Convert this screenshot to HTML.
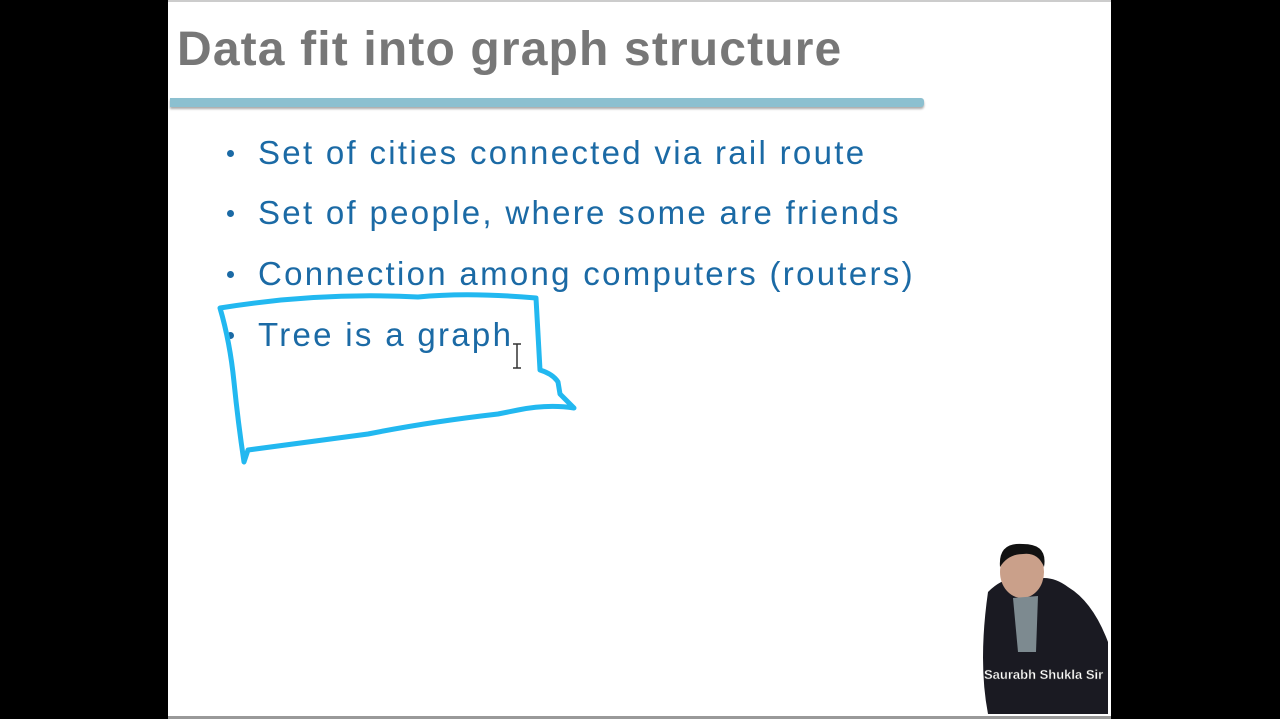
<!DOCTYPE html>
<html><head><style>
body{margin:0;width:1280px;height:719px;background:#000;overflow:hidden;position:relative;font-family:"Liberation Sans",sans-serif}
.slide{position:absolute;left:168px;top:0;width:943px;height:716px;background:#fff;border-top:2px solid #ccc}
.title{position:absolute;left:9px;top:20px;font-size:48px;font-weight:bold;color:#777;letter-spacing:1.15px;white-space:nowrap}
.bar{position:absolute;left:2px;top:96px;width:754px;height:9px;background:#8cc0d0;border-radius:0 3px 3px 0;box-shadow:0 2px 2px #aaa}
.b{position:absolute;left:90px;font-size:33px;color:#1b6aa5;white-space:nowrap;letter-spacing:2.3px}
.d{position:absolute;left:59px;width:7px;height:7px;border-radius:50%;background:#1b6aa5}
.ln{position:absolute;left:0;top:714px;width:943px;height:3px;background:#999}
</style></head><body>
<div class="slide">
<div class="title">Data fit into graph structure</div>
<div class="bar"></div>
<div class="d" style="top:148px"></div><div class="b" style="top:132px">Set of cities connected via rail route</div>
<div class="d" style="top:208px"></div><div class="b" style="top:192px">Set of people, where some are friends</div>
<div class="d" style="top:269px"></div><div class="b" style="top:253px">Connection among computers (routers)</div>
<div class="d" style="top:330px"></div><div class="b" style="top:314px">Tree is a graph</div>
<svg style="position:absolute;left:0;top:0" width="943" height="716">
<path d="M52 306 Q150 290 250 295 Q300 290 368 296 L372 368 Q385 372 390 380 L392 392 L406 406 Q380 402 350 408 L330 412 Q260 420 200 432 Q140 440 80 448 L76 460 Q70 420 66 380 Q62 340 52 306 Z" fill="none" stroke="#22b8f0" stroke-width="5" stroke-linejoin="round"/>
<path d="M349 342 v24 M345 342 h8 M345 366 h8" stroke="#333" stroke-width="1.5"/>
<path d="M820 590 Q840 570 860 580 Q880 570 900 585 Q925 600 940 640 L940 712 L820 712 Q810 660 820 590Z" fill="#1a1a22"/>
<ellipse cx="854" cy="570" rx="22" ry="26" fill="#caa08a"/>
<path d="M832 565 Q830 540 855 542 Q880 542 876 565 Q870 550 855 552 Q840 552 832 565Z" fill="#111"/>
<path d="M845 596 L870 594 L868 650 L850 650Z" fill="#7d8a90"/>
<text x="816" y="677" font-size="13" fill="#fff" stroke="#444" stroke-width="0.4" font-weight="bold">Saurabh Shukla Sir</text>
</svg>
<div class="ln"></div>
</div>
</body></html>
